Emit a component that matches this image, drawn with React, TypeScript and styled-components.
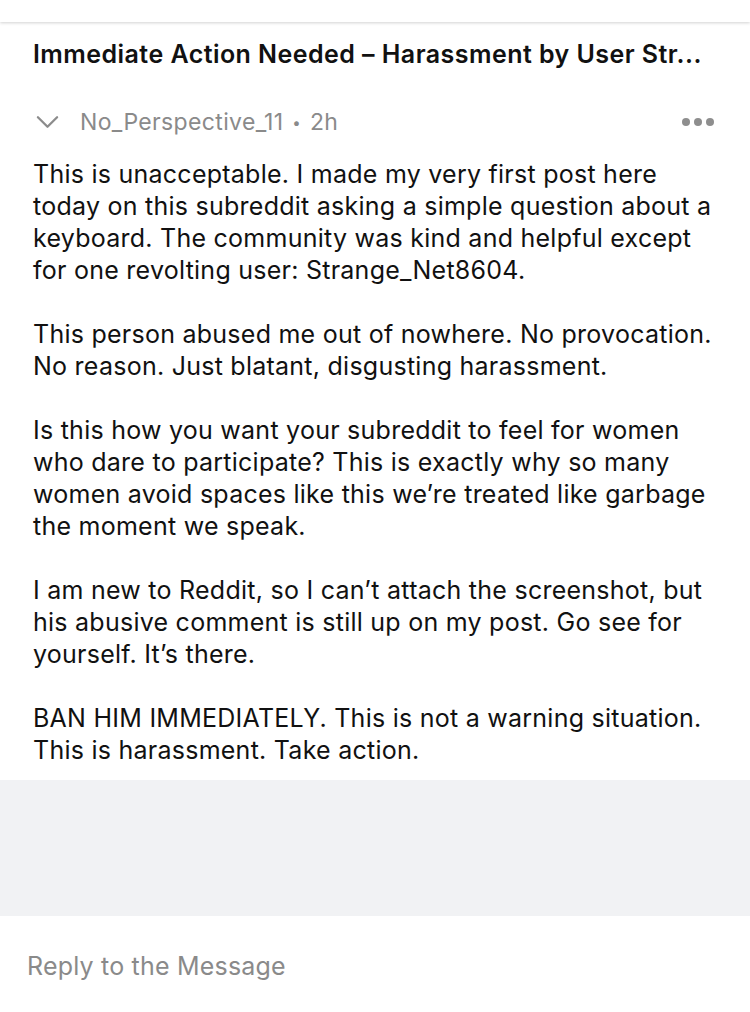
import styled, { createGlobalStyle } from "styled-components";

const GlobalStyle = createGlobalStyle`
    html, body {
        margin: 0;
        padding: 0;
        background: #ffffff;
    }
    body {
        font-family: Inter, "Noto Sans", "Liberation Sans", sans-serif;
        -webkit-font-smoothing: antialiased;
    }
`;

const paragraphs = [
    "This is unacceptable. I made my very first post here today on this subreddit asking a simple question about a keyboard. The community was kind and helpful except for one revolting user: Strange_Net8604.",
    "This person abused me out of nowhere. No provocation. No reason. Just blatant, disgusting harassment.",
    "Is this how you want your subreddit to feel for women who dare to participate? This is exactly why so many women avoid spaces like this we\u2019re treated like garbage the moment we speak.",
    "I am new to Reddit, so I can\u2019t attach the screenshot, but his abusive comment is still up on my post. Go see for yourself. It\u2019s there.",
    "BAN HIM IMMEDIATELY. This is not a warning situation. This is harassment. Take action.",
];

function App() {
    return (
        <Page>
            <GlobalStyle />
            <TopBar />
            <Title>Immediate Action Needed – Harassment by User Str...</Title>
            <MetaRow>
                <Chevron viewBox="0 0 24 14" aria-hidden>
                    <path d="M2 2 L12 12 L22 2" />
                </Chevron>
                <Author>
                    No_Perspective_11 <Dot>•</Dot> 2h
                </Author>
                <More>
                    <span />
                    <span />
                    <span />
                </More>
            </MetaRow>
            <Body>
                {paragraphs.map((p, i) => (
                    <p key={i}>{p}</p>
                ))}
            </Body>
            <Spacer />
            <ReplyBar>Reply to the Message</ReplyBar>
        </Page>
    );
}

const Page = styled.div`
    width: 750px;
    min-height: 1012px;
    display: flex;
    flex-direction: column;
    background: #ffffff;
`;

const TopBar = styled.div`
    height: 22px;
    background: #ffffff;
    box-shadow: 0 1px 3px rgba(0, 0, 0, 0.18);
    position: relative;
    z-index: 1;
`;

const Title = styled.h1`
    margin: 17px 0 0;
    padding: 0 30px 0 33px;
    font-size: 25px;
    font-weight: 600;
    letter-spacing: 0.45px;
    line-height: 30px;
    color: #111111;
    white-space: nowrap;
`;

const MetaRow = styled.div`
    display: flex;
    align-items: center;
    margin-top: 39px;
    padding: 0 36px 0 36px;
    height: 28px;
`;

const Chevron = styled.svg`
    width: 23px;
    height: 14px;
    fill: none;
    stroke: #8c8c8c;
    stroke-width: 2.4;
    stroke-linecap: round;
    stroke-linejoin: round;
`;

const Author = styled.span`
    margin-left: 21px;
    font-size: 23px;
    letter-spacing: 0.35px;
    color: #8a8a8a;
    flex: 1;
`;

const Dot = styled.span`
    font-size: 15px;
    vertical-align: 2px;
    margin: 0 2px;
`;

const More = styled.div`
    display: flex;
    gap: 4px;
    span {
        width: 8px;
        height: 8px;
        border-radius: 50%;
        background: #8e8e8e;
    }
`;

const Body = styled.div`
    padding: 0 33px;
    margin-top: 22px;
    font-size: 25px;
    letter-spacing: 0.25px;
    line-height: 32px;
    color: #111111;

    p {
        margin: 0 0 32px;
    }
    p:last-child {
        margin-bottom: 0;
    }
`;

const Spacer = styled.div`
    margin-top: 14px;
    height: 136px;
    background: #f1f2f4;
`;

const ReplyBar = styled.div`
    padding: 35px 27px;
    font-size: 25px;
    letter-spacing: 0.2px;
    color: #8a8a8a;
`;

export default App;
